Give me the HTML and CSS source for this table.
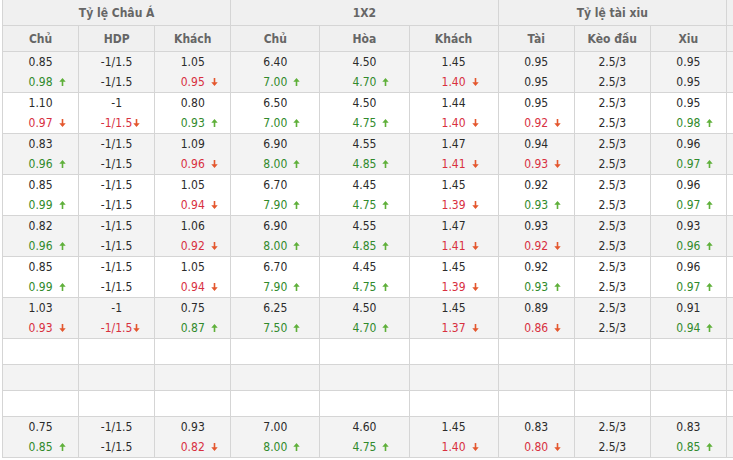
FILE: index.html
```html
<!DOCTYPE html>
<html lang="vi">
<head>
<meta charset="utf-8">
<title>Tỷ lệ kèo</title>
<link rel="stylesheet" href="styles.css">
</head>
<body>
<table class="odds">
  <colgroup>
    <col class="c-a"><col class="c-a"><col class="c-a">
    <col class="c-b"><col class="c-b"><col class="c-b">
    <col class="c-a"><col class="c-a"><col class="c-a">
    <col class="c-x">
  </colgroup>
  <thead>
    <tr class="h1">
      <th colspan="3">Tỷ lệ Châu Á</th>
      <th colspan="3">1X2</th>
      <th colspan="3">Tỷ lệ tài xiu</th>
      <th></th>
    </tr>
    <tr class="h2">
      <th>Chủ</th><th>HDP</th><th>Khách</th>
      <th>Chủ</th><th>Hòa</th><th>Khách</th>
      <th>Tài</th><th>Kèo đầu</th><th>Xiu</th>
      <th></th>
    </tr>
  </thead>
  <tbody id="rows"></tbody>
</table>
<script src="app.js"></script>
</body>
</html>
```

FILE: app.js
```js
const data = [
  [["0.85","0.98","u"],["-1/1.5","-1/1.5",""],["1.05","0.95","d"],["6.40","7.00","u"],["4.50","4.70","u"],["1.45","1.40","d"],["0.95","0.95",""],["2.5/3","2.5/3",""],["0.95","0.95",""]],
  [["1.10","0.97","d"],["-1","-1/1.5","d"],["0.80","0.93","u"],["6.50","7.00","u"],["4.50","4.75","u"],["1.44","1.40","d"],["0.95","0.92","d"],["2.5/3","2.5/3",""],["0.95","0.98","u"]],
  [["0.83","0.96","u"],["-1/1.5","-1/1.5",""],["1.09","0.96","d"],["6.90","8.00","u"],["4.55","4.85","u"],["1.47","1.41","d"],["0.94","0.93","d"],["2.5/3","2.5/3",""],["0.96","0.97","u"]],
  [["0.85","0.99","u"],["-1/1.5","-1/1.5",""],["1.05","0.94","d"],["6.70","7.90","u"],["4.45","4.75","u"],["1.45","1.39","d"],["0.92","0.93","u"],["2.5/3","2.5/3",""],["0.96","0.97","u"]],
  [["0.82","0.96","u"],["-1/1.5","-1/1.5",""],["1.06","0.92","d"],["6.90","8.00","u"],["4.55","4.85","u"],["1.47","1.41","d"],["0.93","0.92","d"],["2.5/3","2.5/3",""],["0.93","0.96","u"]],
  [["0.85","0.99","u"],["-1/1.5","-1/1.5",""],["1.05","0.94","d"],["6.70","7.90","u"],["4.45","4.75","u"],["1.45","1.39","d"],["0.92","0.93","u"],["2.5/3","2.5/3",""],["0.96","0.97","u"]],
  [["1.03","0.93","d"],["-1","-1/1.5","d"],["0.75","0.87","u"],["6.25","7.50","u"],["4.50","4.70","u"],["1.45","1.37","d"],["0.89","0.86","d"],["2.5/3","2.5/3",""],["0.91","0.94","u"]],
  null, null, null,
  [["0.75","0.85","u"],["-1/1.5","-1/1.5",""],["0.93","0.82","d"],["7.00","8.00","u"],["4.60","4.75","u"],["1.45","1.40","d"],["0.83","0.80","d"],["2.5/3","2.5/3",""],["0.83","0.85","u"]]
];

const UP = '<svg viewBox="0 0 7 8" width="7" height="8"><path d="M3.5 0L6.7 3.8H4.3V8H2.7V3.8H0.3Z"/></svg>';
const DOWN = '<svg viewBox="0 0 7 8" width="7" height="8"><path d="M3.5 8L6.7 4.2H4.3V0H2.7V4.2H0.3Z"/></svg>';

const tbody = document.getElementById('rows');
data.forEach((row, i) => {
  const tr = document.createElement('tr');
  tr.className = (i % 2 === 0 ? 'alt' : '') + (row ? ' data' : ' empty');
  let html = '';
  if (!row) {
    for (let k = 0; k < 10; k++) html += '<td></td>';
  } else {
    row.forEach((c, k) => {
      const dir = c[2];
      const cls = dir === 'u' ? 'up' : dir === 'd' ? 'down' : '';
      const arrow = dir ? '<span class="arrow' + (k === 1 ? ' tight' : '') + '">' + (dir === 'u' ? UP : DOWN) + '</span>' : '';
      html += '<td><div class="line">' + c[0] + '</div><div class="line ' + cls + '">' + c[1] + arrow + '</div></td>';
    });
    html += '<td></td>';
  }
  tr.innerHTML = html;
  tbody.appendChild(tr);
});
```

FILE: styles.css
```css
html, body {
  margin: 0;
  padding: 0;
  background: #fff;
  overflow: hidden;
}
body {
  padding-left: 2px;
  font-family: "DejaVu Sans Condensed", "Liberation Sans", sans-serif;
  font-size: 12px;
  color: #2b2b2b;
}
.odds {
  border-collapse: collapse;
  table-layout: fixed;
  width: 760px;
  margin-top: -1px;
}
.c-a { width: 76px; }
.c-b { width: 89px; }
.c-x { width: 35px; }
.odds th,
.odds td {
  border: 1px solid #d5d5d5;
  padding: 0;
  text-align: center;
  vertical-align: middle;
}
.odds th {
  background: #f0f0f0;
  color: #666;
  font-weight: bold;
  font-size: 12px;
}
.h1 th { height: 25px; }
.h2 th { height: 25px; }
.data td { height: 40px; }
.empty td { height: 25px; }
.alt td { background: #f3f3f3; }
.line {
  line-height: 20px;
  white-space: nowrap;
}
.up { color: #318a2c; }
.down { color: #d8303f; }
.arrow {
  display: inline-block;
  width: 7px;
  height: 8px;
  margin-left: 6px;
  margin-right: -13px;
  vertical-align: 0;
}
.arrow.tight {
  margin-left: 1px;
  margin-right: -8px;
}
.arrow svg { display: block; }
.up .arrow svg { fill: #5fb03a; }
.down .arrow svg { fill: #e4572e; }
```
